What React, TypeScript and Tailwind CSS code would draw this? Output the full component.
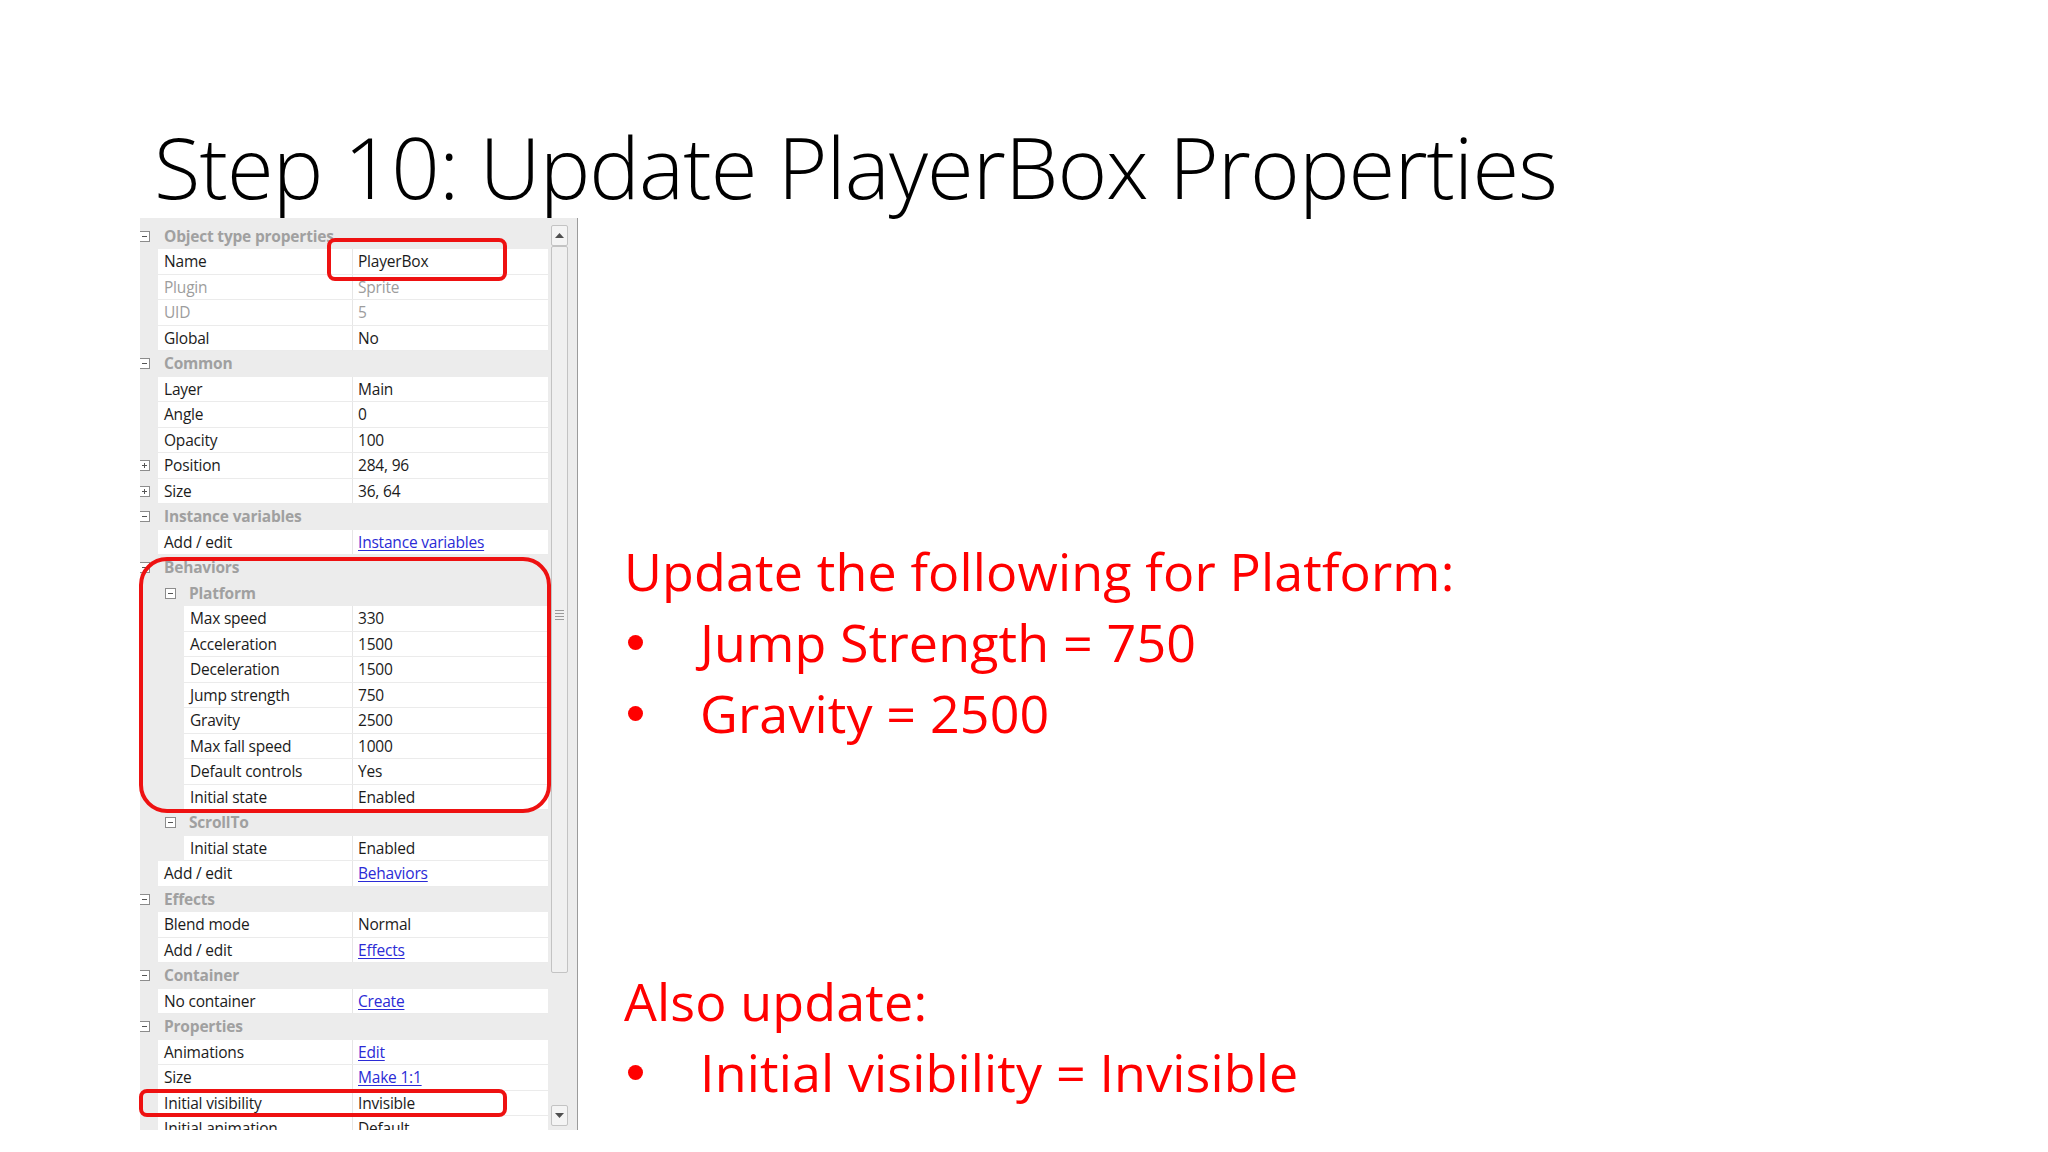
import React from 'react';

type Row =
  | {kind: 'cat'; label: string}
  | {kind: 'sub'; label: string}
  | {
      kind: 'prop';
      name: string;
      value: string;
      nested?: boolean;
      link?: boolean;
      muted?: boolean;
      plus?: boolean;
    };

const rows: Row[] = [
  {kind: 'cat', label: 'Object type properties'},
  {kind: 'prop', name: 'Name', value: 'PlayerBox'},
  {kind: 'prop', name: 'Plugin', value: 'Sprite', muted: true},
  {kind: 'prop', name: 'UID', value: '5', muted: true},
  {kind: 'prop', name: 'Global', value: 'No'},
  {kind: 'cat', label: 'Common'},
  {kind: 'prop', name: 'Layer', value: 'Main'},
  {kind: 'prop', name: 'Angle', value: '0'},
  {kind: 'prop', name: 'Opacity', value: '100'},
  {kind: 'prop', name: 'Position', value: '284, 96', plus: true},
  {kind: 'prop', name: 'Size', value: '36, 64', plus: true},
  {kind: 'cat', label: 'Instance variables'},
  {kind: 'prop', name: 'Add / edit', value: 'Instance variables', link: true},
  {kind: 'cat', label: 'Behaviors'},
  {kind: 'sub', label: 'Platform'},
  {kind: 'prop', name: 'Max speed', value: '330', nested: true},
  {kind: 'prop', name: 'Acceleration', value: '1500', nested: true},
  {kind: 'prop', name: 'Deceleration', value: '1500', nested: true},
  {kind: 'prop', name: 'Jump strength', value: '750', nested: true},
  {kind: 'prop', name: 'Gravity', value: '2500', nested: true},
  {kind: 'prop', name: 'Max fall speed', value: '1000', nested: true},
  {kind: 'prop', name: 'Default controls', value: 'Yes', nested: true},
  {kind: 'prop', name: 'Initial state', value: 'Enabled', nested: true},
  {kind: 'sub', label: 'ScrollTo'},
  {kind: 'prop', name: 'Initial state', value: 'Enabled', nested: true},
  {kind: 'prop', name: 'Add / edit', value: 'Behaviors', link: true},
  {kind: 'cat', label: 'Effects'},
  {kind: 'prop', name: 'Blend mode', value: 'Normal'},
  {kind: 'prop', name: 'Add / edit', value: 'Effects', link: true},
  {kind: 'cat', label: 'Container'},
  {kind: 'prop', name: 'No container', value: 'Create', link: true},
  {kind: 'cat', label: 'Properties'},
  {kind: 'prop', name: 'Animations', value: 'Edit', link: true},
  {kind: 'prop', name: 'Size', value: 'Make 1:1', link: true},
  {kind: 'prop', name: 'Initial visibility', value: 'Invisible'},
  {kind: 'prop', name: 'Initial animation', value: 'Default'},
];

// little [-] / [+] box used by the property grid
const Expander = ({plus = false, className}: {plus?: boolean; className: string}) => (
  <div
    className={`absolute flex h-[11px] w-[11px] items-center justify-center border border-[#8c8c8c] bg-white ${className}`}
  >
    <div className="absolute h-px w-[5px] bg-[#555]" />
    {plus && <div className="absolute h-[5px] w-px bg-[#555]" />}
  </div>
);

const GridRow = ({row}: {row: Row}) => {
  if (row.kind === 'cat') {
    return (
      <div className="relative flex h-[25.5px] items-center">
        <Expander className="left-[-1px] top-[7px]" />
        <span className="pl-[24px] font-bold leading-[25.5px] text-[#a0a0a0]">{row.label}</span>
      </div>
    );
  }
  if (row.kind === 'sub') {
    return (
      <div className="relative flex h-[25.5px] items-center">
        <Expander className="left-[25px] top-[7px]" />
        <span className="pl-[49px] font-bold leading-[25.5px] text-[#a0a0a0]">{row.label}</span>
      </div>
    );
  }
  return (
    <div className="relative flex h-[25.5px]">
      {row.plus && <Expander plus className="left-[-1px] top-[7px]" />}
      <div className={row.nested ? 'w-[44px] shrink-0' : 'w-[18px] shrink-0'} />
      <div className="flex flex-1 border-b border-[#ebebeb] bg-white leading-[24.5px]">
        <div
          className={`${row.nested ? 'w-[169px]' : 'w-[195px]'} shrink-0 border-r border-[#e6e6e6] pl-[6px] ${
            row.muted ? 'text-[#9d9d9d]' : 'text-[#1b1b1b]'
          }`}
        >
          {row.name}
        </div>
        <div
          className={`pl-[5px] ${
            row.link
              ? 'text-[#2b2bd6] underline decoration-1 underline-offset-2'
              : row.muted
                ? 'text-[#9d9d9d]'
                : 'text-[#1b1b1b]'
          }`}
        >
          {row.value}
        </div>
      </div>
    </div>
  );
};

const ScrollArrow = ({down = false}: {down?: boolean}) => (
  <div className="flex h-[21px] w-[17px] items-center justify-center rounded-[2px] border border-[#c3c3c3] bg-[#f4f4f4]">
    <svg width="9" height="5" viewBox="0 0 9 5">
      <path d={down ? 'M0 0 L9 0 L4.5 5 Z' : 'M0 5 L9 5 L4.5 0 Z'} fill="#4f4f4f" />
    </svg>
  </div>
);

const PropertyGrid = () => (
  <div className="relative w-[438px] shrink-0">
    <div className="flex h-[912px] overflow-hidden border-r border-[#9b9b9b] bg-[#ececec] font-['Open_Sans',sans-serif] text-[15.5px] tracking-[-0.2px]">
      <div className="w-[408px] shrink-0 pt-[5.5px]">
        {rows.map((row, i) => (
          <GridRow key={i} row={row} />
        ))}
      </div>
      <div className="ml-[3px] flex w-[17px] flex-col pt-[7px]">
        <ScrollArrow />
        <div className="relative h-[727px] rounded-[2px] border border-[#c3c3c3] bg-[#f0f0f0]">
          <div className="absolute left-[3px] top-[363px] flex w-[9px] flex-col gap-[2px]">
            <div className="h-px bg-[#9a9a9a]" />
            <div className="h-px bg-[#9a9a9a]" />
            <div className="h-px bg-[#9a9a9a]" />
            <div className="h-px bg-[#9a9a9a]" />
          </div>
        </div>
        <div className="flex-1" />
        <div className="mb-[4px]">
          <ScrollArrow down />
        </div>
      </div>
    </div>
    {/* red call-outs drawn over the grid */}
    <div className="absolute left-[187px] top-[20px] h-[43px] w-[180px] rounded-[8px] border-[4px] border-[#ee1111]" />
    <div className="absolute left-[-1px] top-[339px] h-[256px] w-[412px] rounded-[28px] border-[4px] border-[#ee1111]" />
    <div className="absolute left-[-1px] top-[871px] h-[28px] w-[368px] rounded-[8px] border-[4px] border-[#ee1111]" />
  </div>
);

const Bullet = ({children}: {children: React.ReactNode}) => (
  <div className="flex h-[71px] items-start">
    <div className="ml-[4px] mt-[29px] h-[15px] w-[15px] shrink-0 rounded-full bg-[#ff0000]" />
    <div className="ml-[57px] whitespace-nowrap">{children}</div>
  </div>
);

export default function App() {
  return (
    <div className="h-[1152px] w-[2048px] overflow-hidden bg-white">
      <h1 className="mt-[123.5px] h-[85px] whitespace-nowrap pl-[154px] font-['Open_Sans',sans-serif] text-[85px] font-light leading-none tracking-[-0.9px] text-black">
        Step 10: Update PlayerBox Properties
      </h1>
      <div className="mt-[9.5px] flex pl-[140px]">
        <PropertyGrid />
        <div className="ml-[46px] pt-[317px] font-['Open_Sans',sans-serif] text-[52px] leading-[71px] tracking-[0.15px] text-[#ff0000]">
          <div className="h-[71px] whitespace-nowrap">Update the following for Platform:</div>
          <Bullet>Jump Strength = 750</Bullet>
          <Bullet>Gravity = 2500</Bullet>
          <div className="mt-[217px] h-[71px] whitespace-nowrap">Also update:</div>
          <Bullet>Initial visibility = Invisible</Bullet>
        </div>
      </div>
    </div>
  );
}
